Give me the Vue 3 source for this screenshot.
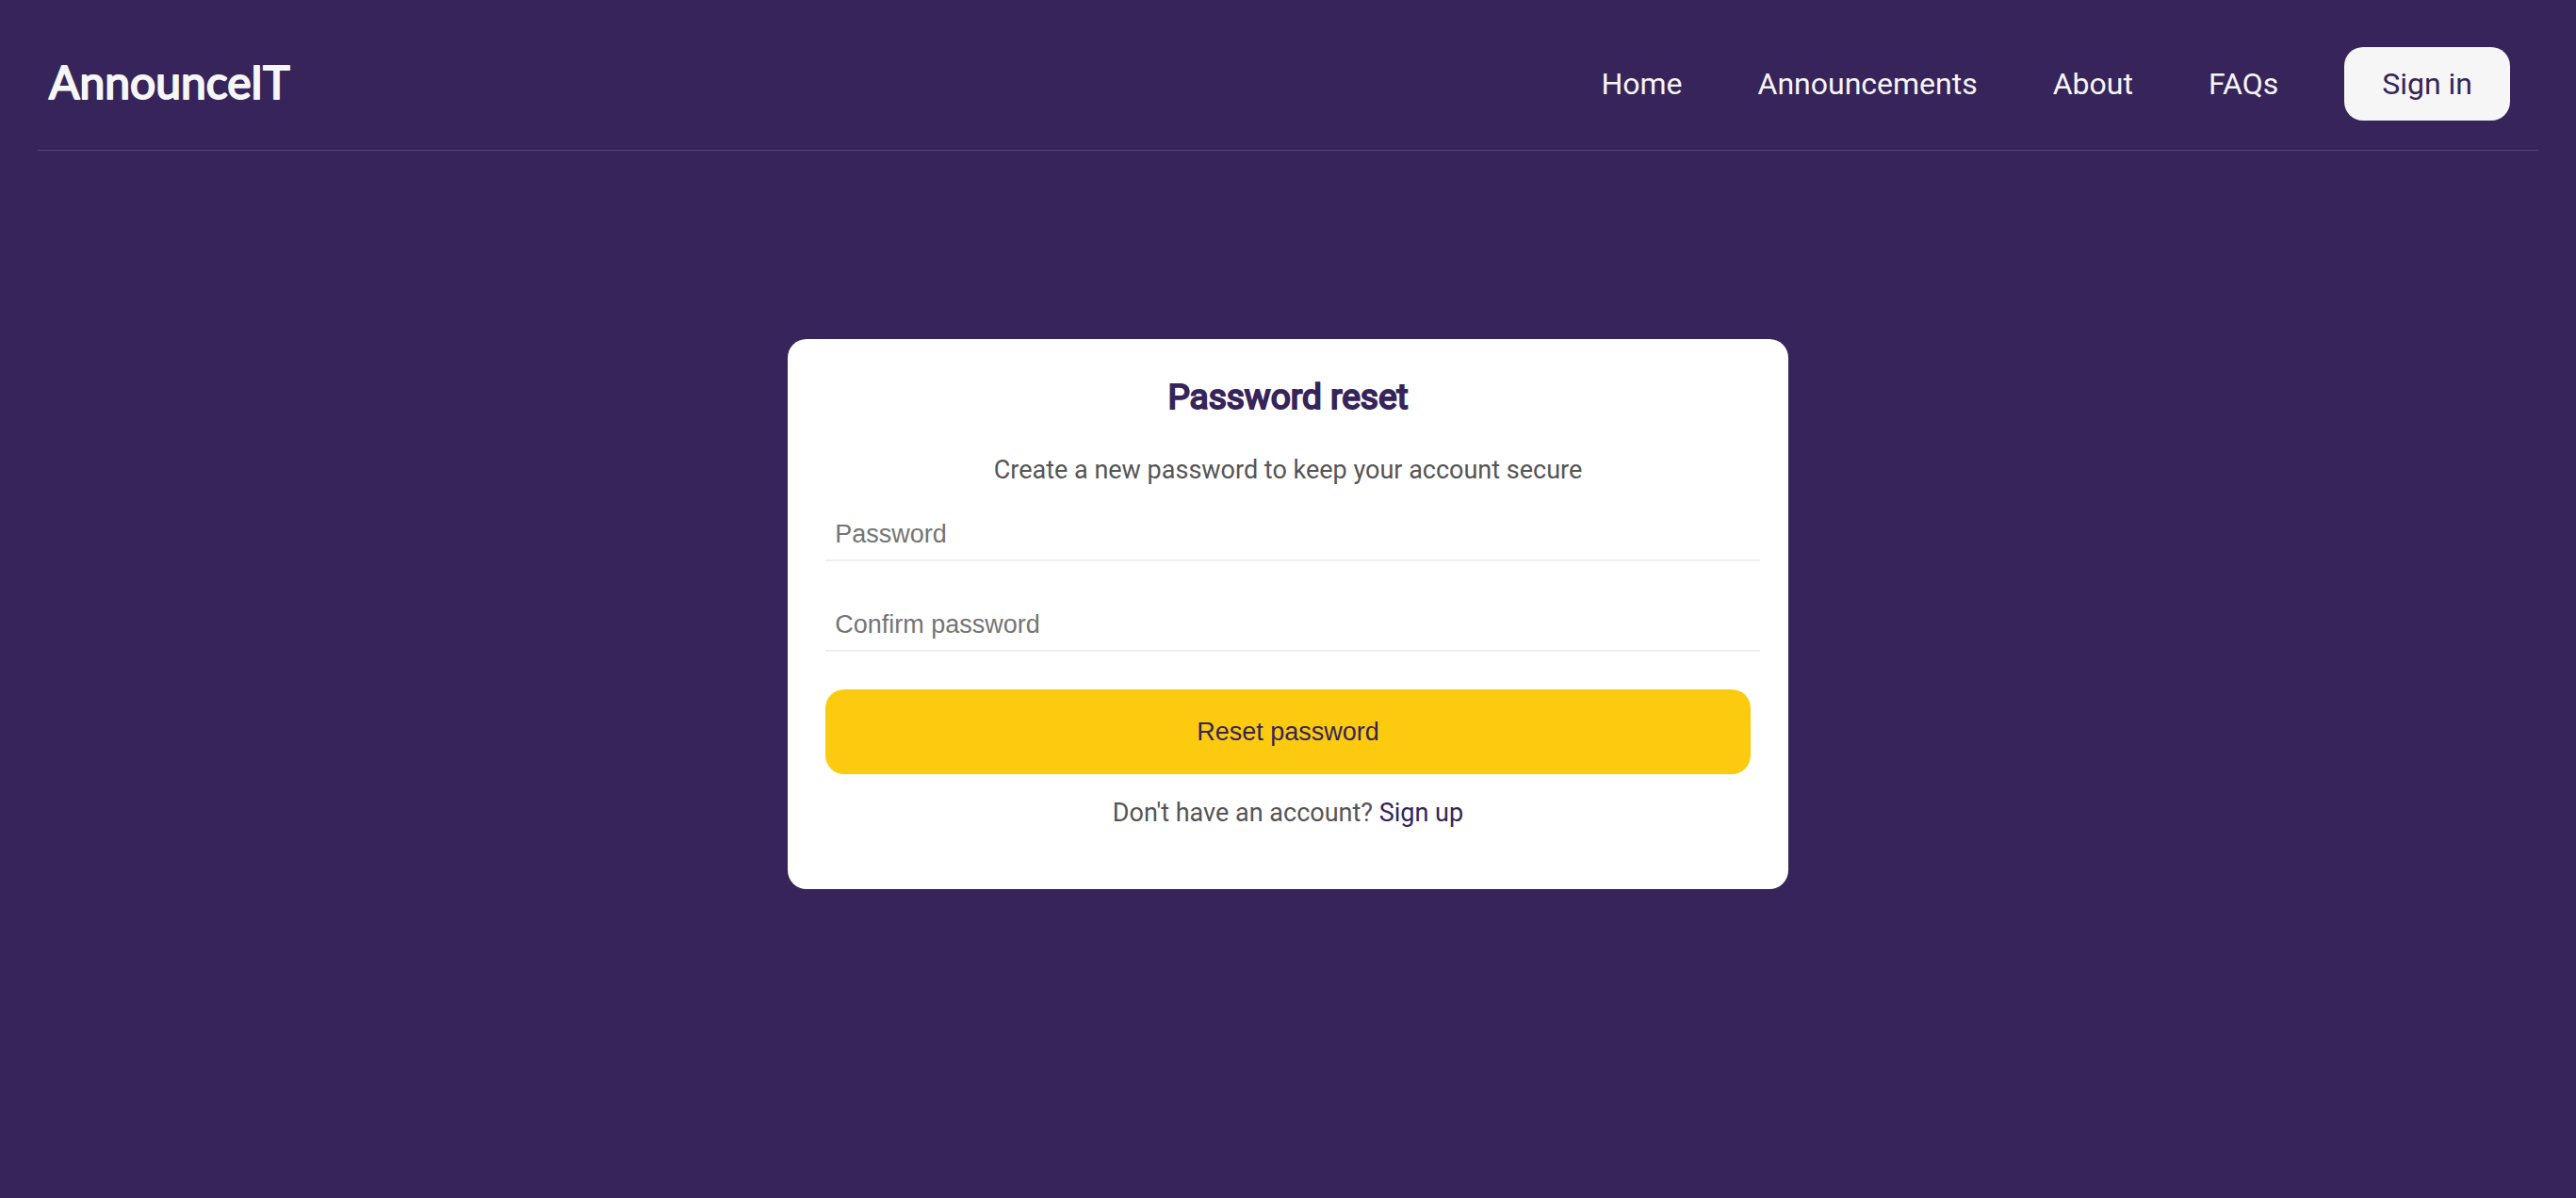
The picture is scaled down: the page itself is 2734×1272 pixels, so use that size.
<script setup>
import { ref } from 'vue'

const links = ['Home', 'Announcements', 'About', 'FAQs']
const password = ref('')
const confirmation = ref('')
</script>

<template>
  <div class="page">
    <header class="header">
      <a class="brand" href="#" aria-label="AnnounceIT home">
        <svg class="logo" width="280" height="70" aria-hidden="true">
          <text x="2" y="51">AnnounceIT</text>
        </svg>
      </a>
      <nav class="nav">
        <a v-for="link in links" :key="link" class="link" href="#">{{ link }}</a>
        <a class="sign-in" href="#">Sign in</a>
      </nav>
    </header>

    <main class="main">
      <form class="card" @submit.prevent>
        <h1 class="title">Password reset</h1>
        <p class="note">Create a new password to keep your account secure</p>
        <div class="fields">
          <input v-model="password" class="field" type="password" placeholder="Password" aria-label="Password" />
          <input v-model="confirmation" class="field" type="password" placeholder="Confirm password" aria-label="Confirm password" />
        </div>
        <button class="submit" type="submit">Reset password</button>
        <p class="note">Don't have an account? <a class="sign-up" href="#">Sign up</a></p>
      </form>
    </main>
  </div>
</template>

<style>
body {
  margin: 0;
  background: #36245a;
}
</style>

<style scoped>
.page {
  box-sizing: border-box;
  min-height: 100vh;
  padding: 0 40px;
  background: #36245a;
  color: #555;
  font-family: Roboto, sans-serif;
  font-size: 27px;
  line-height: 30px;
}

.header {
  display: flex;
  align-items: center;
  justify-content: space-between;
  padding: 50px 30px 31px 10px;
  border-bottom: 1px solid #54427a;
}

.brand,
.logo {
  display: block;
}

/* A round-joined outline gives the wordmark soft ends. */
.logo text {
  fill: #f6f6f6;
  stroke: #f6f6f6;
  stroke-width: 2px;
  stroke-linejoin: round;
  font-family: Lato, sans-serif;
  font-size: 48px;
  font-weight: 400;
}

.nav {
  display: flex;
  align-items: center;
}

.link,
.sign-in {
  padding: 20px 40px;
  color: #f6f6f6;
  font-size: 32px;
  line-height: 38px;
  text-decoration: none;
}

.sign-in {
  margin-left: 30px;
  border-radius: 20px;
  background: #f6f6f6;
  color: #36245a;
}

.main {
  display: flex;
  justify-content: center;
  padding: 200px 0;
}

.card {
  box-sizing: border-box;
  width: 40%;
  padding: 40px;
  border-radius: 20px;
  background: #fff;
  text-align: center;
}

.title {
  margin: 0 0 40px;
  color: #36245a;
  font-size: 37px;
  font-weight: 400;
  line-height: 44px;
  -webkit-text-stroke: 2px #36245a;
}

.note {
  margin: 26px 0;
}

.fields {
  display: flex;
  flex-direction: column;
  gap: 40px;
}

.field {
  box-sizing: border-box;
  width: calc(100% + 10px);
  padding: 12px 10px;
  border: 0;
  border-bottom: 2px solid #eee;
  background: transparent;
  color: #36245a;
  font-family: "Liberation Sans", Arial, sans-serif;
  font-size: 27px;
  line-height: 30px;
  outline: none;
}

.field::placeholder {
  color: #757575;
}

.submit {
  width: 100%;
  margin-top: 40px;
  padding: 30px;
  border: 0;
  border-radius: 20px;
  background: #fccb10;
  color: #36245a;
  font-family: "Liberation Sans", Arial, sans-serif;
  font-size: 27px;
  line-height: 30px;
  cursor: pointer;
}

.sign-up {
  color: #36245a;
  text-decoration: none;
}
</style>
